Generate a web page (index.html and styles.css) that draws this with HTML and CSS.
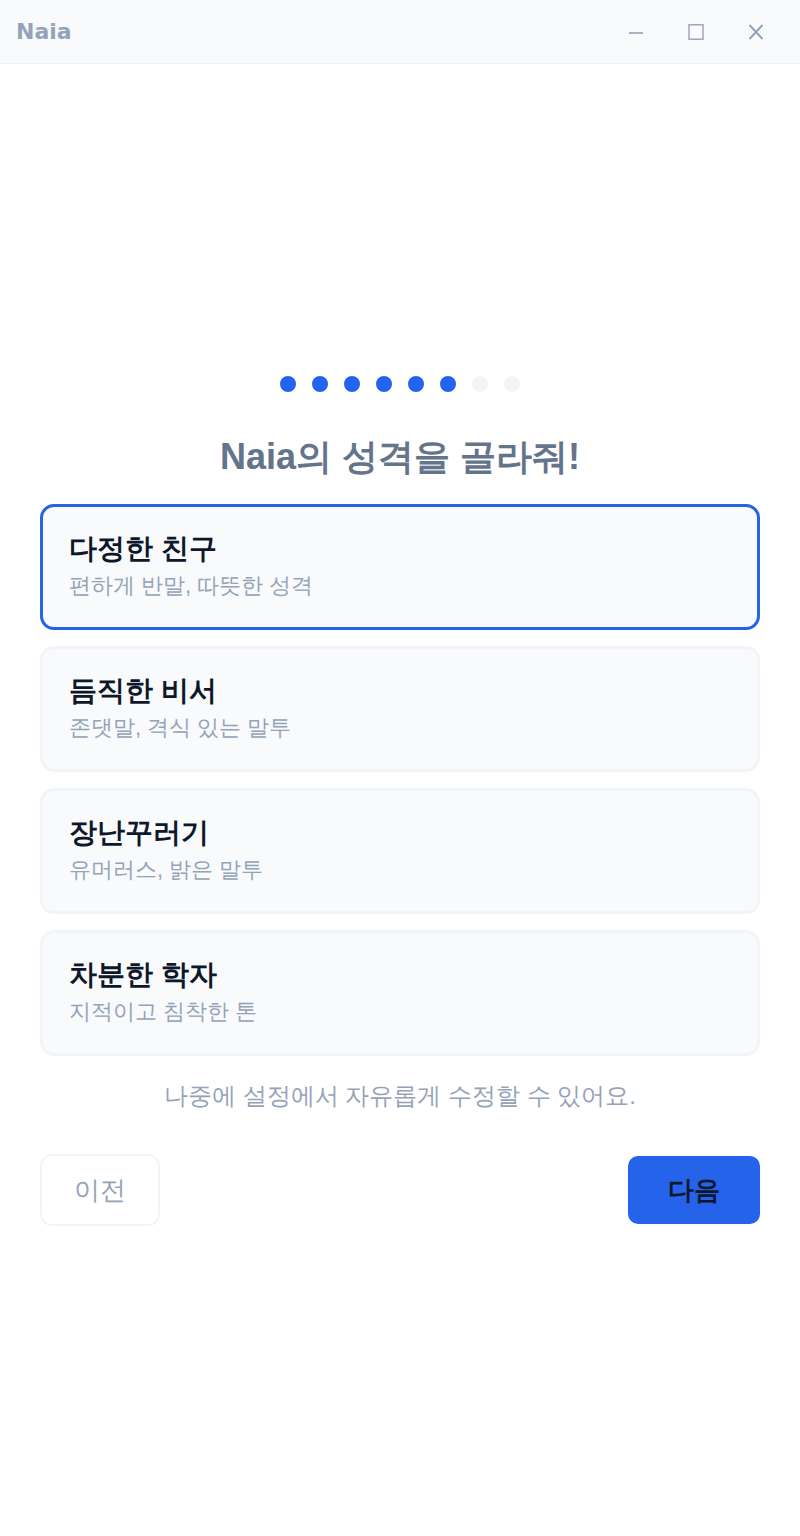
FILE: index.html
```html
<!DOCTYPE html>
<html lang="ko">
<head>
    <meta charset="UTF-8">
    <meta name="viewport" content="width=device-width, initial-scale=1.0">
    <title>Naia</title>
    <link rel="stylesheet" href="styles.css">
</head>
<body>
    <div class="titlebar">
        <span class="app-name">Naia</span>
        <div class="window-controls">
            <button class="win-btn" aria-label="minimize">
                <svg width="16" height="16" viewBox="0 0 16 16"><line x1="1" y1="9" x2="15" y2="9" stroke="currentColor" stroke-width="1.6"/></svg>
            </button>
            <button class="win-btn" aria-label="maximize">
                <svg width="16" height="16" viewBox="0 0 16 16"><rect x="1" y="0.8" width="14" height="14.4" fill="none" stroke="currentColor" stroke-width="1.4"/></svg>
            </button>
            <button class="win-btn" aria-label="close">
                <svg width="16" height="16" viewBox="0 0 16 16"><path d="M1.5 1 L14.5 15 M14.5 1 L1.5 15" stroke="currentColor" stroke-width="2" fill="none"/></svg>
            </button>
        </div>
    </div>

    <div class="onboarding">
        <div class="steps" id="steps"></div>
        <h1 class="heading">Naia의 성격을 골라줘!</h1>
        <div class="options" id="options"></div>
        <p class="hint">나중에 설정에서 자유롭게 수정할 수 있어요.</p>
        <div class="actions">
            <button class="prev-button">이전</button>
            <button class="next-button">다음</button>
        </div>
    </div>

    <script>
        const totalSteps = 8;
        const currentStep = 6;

        const personalities = [
            { id: 'friend', title: '다정한 친구', desc: '편하게 반말, 따뜻한 성격' },
            { id: 'secretary', title: '듬직한 비서', desc: '존댓말, 격식 있는 말투' },
            { id: 'prankster', title: '장난꾸러기', desc: '유머러스, 밝은 말투' },
            { id: 'scholar', title: '차분한 학자', desc: '지적이고 침착한 톤' },
        ];

        let selected = 'friend';

        function renderSteps() {
            const steps = document.getElementById('steps');
            steps.innerHTML = '';
            for (let i = 0; i < totalSteps; i++) {
                const dot = document.createElement('span');
                dot.classList.add('dot');
                if (i < currentStep) dot.classList.add('done');
                steps.appendChild(dot);
            }
        }

        function renderOptions() {
            const container = document.getElementById('options');
            container.innerHTML = '';
            personalities.forEach(p => {
                const card = document.createElement('div');
                card.classList.add('option');
                if (p.id === selected) card.classList.add('selected');
                card.innerHTML = `
                    <div class="option-title">${p.title}</div>
                    <div class="option-desc">${p.desc}</div>
                `;
                card.onclick = () => { selected = p.id; renderOptions(); };
                container.appendChild(card);
            });
        }

        renderSteps();
        renderOptions();
    </script>
</body>
</html>
```

FILE: styles.css
```css
body {
    margin: 0;
    padding: 0;
    background-color: #ffffff;
    font-family: Arial, sans-serif;
}

.titlebar {
    height: 63px;
    background-color: #f8fafc;
    border-bottom: 1px solid #eef2f7;
    display: flex;
    justify-content: space-between;
    align-items: center;
    padding: 0 16px;
}

.app-name {
    font-family: "DejaVu Sans", sans-serif;
    font-size: 22px;
    font-weight: bold;
    color: #94a3b8;
}

.window-controls {
    display: flex;
    gap: 44px;
    padding-right: 20px;
}

.win-btn {
    background: none;
    border: none;
    padding: 0;
    width: 16px;
    height: 16px;
    color: #94a3b8;
    cursor: pointer;
    display: flex;
}

.onboarding {
    padding: 312px 40px 0;
}

.steps {
    display: flex;
    justify-content: center;
    gap: 16px;
}

.dot {
    width: 16px;
    height: 16px;
    border-radius: 50%;
    background-color: #f1f5f9;
}

.dot.done {
    background-color: #2563eb;
}

.heading {
    margin: 43px 0 25px;
    text-align: center;
    font-size: 36px;
    line-height: 44px;
    color: #64748b;
}

.options {
    display: flex;
    flex-direction: column;
    gap: 16px;
}

.option {
    background-color: #f8fafc;
    border: 3px solid #f1f5f9;
    border-radius: 14px;
    padding: 24px 26px 26px;
    cursor: pointer;
}

.option.selected {
    border-color: #2563eb;
}

.option-title {
    font-size: 28px;
    line-height: 36px;
    font-weight: bold;
    color: #0f172a;
    margin-bottom: 4px;
}

.option-desc {
    font-size: 22px;
    line-height: 30px;
    color: #94a3b8;
}

.hint {
    margin: 24px 0 42px;
    text-align: center;
    font-size: 24px;
    line-height: 32px;
    color: #94a3b8;
}

.actions {
    display: flex;
    justify-content: space-between;
    align-items: center;
}

.prev-button {
    width: 120px;
    height: 72px;
    background: #ffffff;
    border: 2px solid #f1f5f9;
    border-radius: 12px;
    font-family: inherit;
    font-size: 26px;
    color: #94a3b8;
    cursor: pointer;
}

.next-button {
    width: 132px;
    height: 68px;
    background: #2563eb;
    border: none;
    border-radius: 10px;
    font-family: inherit;
    font-size: 26px;
    font-weight: bold;
    color: #0f172a;
    cursor: pointer;
}
```
